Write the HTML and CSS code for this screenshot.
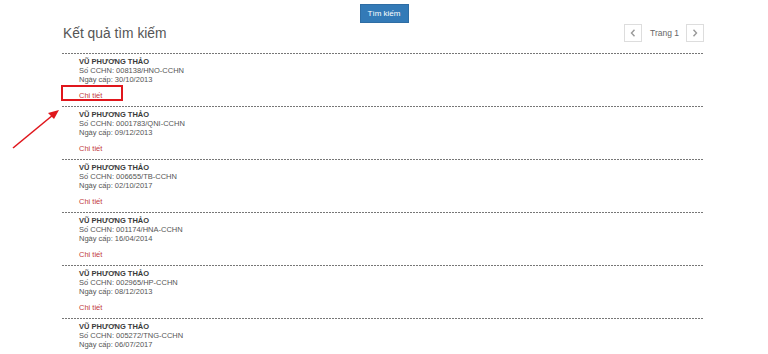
FILE: index.html
```html
<!DOCTYPE html>
<html lang="vi">
<head>
  <meta charset="UTF-8">
  <meta name="viewport" content="width=device-width, initial-scale=1.0">
  <title>Tra cứu chứng chỉ hành nghề</title>
  <link rel="stylesheet" href="styles.css">
</head>
<body>
  <div class="search-bar">
    <button type="button" class="search-button">Tìm kiếm</button>
  </div>

  <div id="results">
    <div class="results-header">
      <h3 class="results-title">Kết quả tìm kiếm</h3>
      <div class="pager">
        <button type="button" class="pager-btn" aria-label="Trang trước">
          <svg width="6" height="8" viewBox="0 0 6 8"><polyline points="4.5,0.8 1.5,4 4.5,7.2" fill="none" stroke="#999" stroke-width="1.4"/></svg>
        </button>
        <span class="pager-label">Trang 1</span>
        <button type="button" class="pager-btn" aria-label="Trang sau">
          <svg width="6" height="8" viewBox="0 0 6 8"><polyline points="1.5,0.8 4.5,4 1.5,7.2" fill="none" stroke="#999" stroke-width="1.4"/></svg>
        </button>
      </div>
    </div>

    <ul class="result-list">
      <li class="result-item">
        <div class="person-name">VŨ PHƯƠNG THẢO</div>
        <div class="person-info">Số CCHN: 008138/HNO-CCHN</div>
        <div class="person-info">Ngày cấp: 30/10/2013</div>
        <a href="#" class="detail-link">Chi tiết</a>
      </li>
      <li class="result-item">
        <div class="person-name">VŨ PHƯƠNG THẢO</div>
        <div class="person-info">Số CCHN: 0001783/QNI-CCHN</div>
        <div class="person-info">Ngày cấp: 09/12/2013</div>
        <a href="#" class="detail-link">Chi tiết</a>
      </li>
      <li class="result-item">
        <div class="person-name">VŨ PHƯƠNG THẢO</div>
        <div class="person-info">Số CCHN: 006655/TB-CCHN</div>
        <div class="person-info">Ngày cấp: 02/10/2017</div>
        <a href="#" class="detail-link">Chi tiết</a>
      </li>
      <li class="result-item">
        <div class="person-name">VŨ PHƯƠNG THẢO</div>
        <div class="person-info">Số CCHN: 001174/HNA-CCHN</div>
        <div class="person-info">Ngày cấp: 16/04/2014</div>
        <a href="#" class="detail-link">Chi tiết</a>
      </li>
      <li class="result-item">
        <div class="person-name">VŨ PHƯƠNG THẢO</div>
        <div class="person-info">Số CCHN: 002965/HP-CCHN</div>
        <div class="person-info">Ngày cấp: 08/12/2013</div>
        <a href="#" class="detail-link">Chi tiết</a>
      </li>
      <li class="result-item">
        <div class="person-name">VŨ PHƯƠNG THẢO</div>
        <div class="person-info">Số CCHN: 005272/TNG-CCHN</div>
        <div class="person-info">Ngày cấp: 06/07/2017</div>
      </li>
    </ul>
  </div>

  <!-- annotation over the screenshot -->
  <div class="mark-box"></div>
  <svg class="mark-arrow" width="60" height="50" viewBox="0 0 60 50">
    <line x1="2" y1="46" x2="42" y2="13" stroke="#e0161c" stroke-width="1.6"/>
    <polygon points="48,8 37,11 43,17" fill="#e0161c"/>
  </svg>
</body>
</html>
```

FILE: styles.css
```css
body {
  font-family: 'Liberation Sans', Arial, sans-serif;
  margin: 0;
  padding: 0;
  background-color: #fff;
  color: #333;
  overflow: hidden;
  position: relative;
}

.search-bar {
  display: flex;
  justify-content: center;
  padding-top: 4px;
}

.search-button {
  width: 49px;
  height: 19px;
  padding: 0;
  border: 1px solid #2e6da4;
  background-color: #337ab7;
  color: #fff;
  font-family: inherit;
  font-size: 8px;
  cursor: pointer;
}

#results {
  width: 642px;
  margin-left: 62px;
}

.results-header {
  display: flex;
  justify-content: space-between;
  align-items: center;
  height: 20px;
  padding-bottom: 10px;
}

.results-title {
  margin: 0;
  padding-left: 1px;
  font-size: 13.8px;
  font-weight: normal;
  color: #555;
}

.pager {
  display: flex;
  align-items: center;
}

.pager-btn {
  display: flex;
  align-items: center;
  justify-content: center;
  width: 18px;
  height: 18px;
  padding: 0;
  border: 1px solid #ddd;
  background: #fff;
  cursor: pointer;
}

.pager-label {
  font-size: 8.5px;
  color: #666;
  margin: 0 7px 0 8px;
}

.result-list {
  list-style: none;
  margin: 0;
  padding: 0;
}

.result-item {
  height: 53px;
  box-sizing: border-box;
  padding: 4px 0 0 17px;
  background: linear-gradient(to right, #777 2px, transparent 2px) top left / 3px 1px repeat-x;
  font-size: 7.5px;
  line-height: 9px;
}

.person-name {
  font-weight: bold;
  color: #3a3a3a;
}

.person-info {
  color: #555;
}

.detail-link {
  display: inline-block;
  margin-top: 7px;
  color: #c23a3e;
  text-decoration: none;
}

.mark-box {
  position: absolute;
  left: 61px;
  top: 85px;
  width: 62px;
  height: 16px;
  box-sizing: border-box;
  border: 2px solid #e0161c;
}

.mark-arrow {
  position: absolute;
  left: 11px;
  top: 102px;
}
```
